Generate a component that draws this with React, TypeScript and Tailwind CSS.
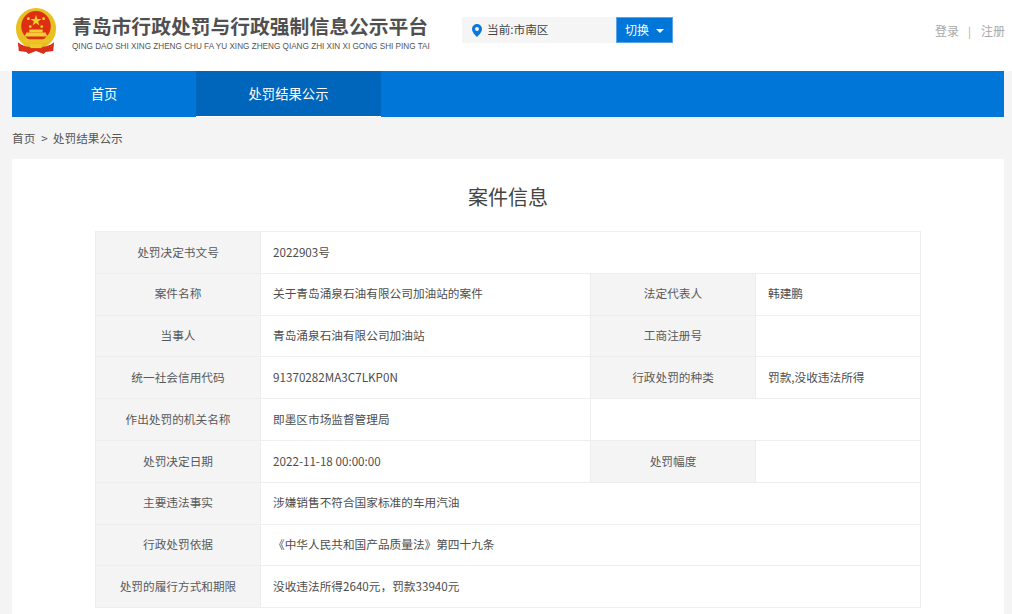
const font = { fontFamily: '"Noto Sans CJK SC", "Liberation Sans", sans-serif' };

const rows: { label: string; value: string; label2?: string; value2?: string; blank?: boolean }[] = [
  { label: "处罚决定书文号", value: "2022903号" },
  { label: "案件名称", value: "关于青岛涌泉石油有限公司加油站的案件", label2: "法定代表人", value2: "韩建鹏" },
  { label: "当事人", value: "青岛涌泉石油有限公司加油站", label2: "工商注册号", value2: "" },
  { label: "统一社会信用代码", value: "91370282MA3C7LKP0N", label2: "行政处罚的种类", value2: "罚款,没收违法所得" },
  { label: "作出处罚的机关名称", value: "即墨区市场监督管理局", blank: true },
  { label: "处罚决定日期", value: "2022-11-18 00:00:00", label2: "处罚幅度", value2: "" },
  { label: "主要违法事实", value: "涉嫌销售不符合国家标准的车用汽油" },
  { label: "行政处罚依据", value: "《中华人民共和国产品质量法》第四十九条" },
  { label: "处罚的履行方式和期限", value: "没收违法所得2640元，罚款33940元" },
];

function Emblem() {
  return (
    <svg width="42" height="46" viewBox="0 0 44 47" preserveAspectRatio="none">
      <circle cx="22" cy="21" r="21" fill="#e8c020" />
      <circle cx="22" cy="18.5" r="15.5" fill="#dc2f14" />
      <path d="M22 7l1.4 4.2h4.4l-3.6 2.6 1.4 4.2-3.6-2.6-3.6 2.6 1.4-4.2-3.6-2.6h4.4z" fill="#f2d020" />
      <circle cx="14" cy="11" r="1.5" fill="#f2d020" />
      <circle cx="30" cy="11" r="1.5" fill="#f2d020" />
      <circle cx="16" cy="19" r="1.5" fill="#f2d020" />
      <circle cx="28" cy="19" r="1.5" fill="#f2d020" />
      <path d="M12 25h20l2 4H10z" fill="#f0d030" />
      <path d="M15 22h14v3H15z" fill="#f0d030" />
      <path d="M8 32h28v3H8z" fill="#e9c428" />
      <path d="M3 35c5 4 11 5 19 5s14-1 19-5l-1 9-8 1-2 2-8-3-8 3-2-2-8-1z" fill="#d9301a" />
      <path d="M16 37h12v4H16z" fill="#edc92c" />
    </svg>
  );
}

function Label({ children }: { children: string }) {
  return (
    <td className="border border-[#eeeeee] bg-[#f4f4f4] pb-[2px] text-center align-middle text-[#595959]">
      {children}
    </td>
  );
}

function Value({ children, span }: { children?: string; span?: number }) {
  return (
    <td colSpan={span} className="border border-[#eeeeee] bg-white px-3 pb-[2px] align-middle text-[#4d4d4d]">
      {children}
    </td>
  );
}

export default function App() {
  return (
    <div className="h-[614px] w-[1012px] overflow-hidden bg-[#f4f4f4]" style={font}>
      <header className="flex h-[71px] items-start bg-white pl-[15px] pr-[7px] pt-[8px]">
        <Emblem />
        <div className="ml-[15px] w-[372px] pt-[4px]">
          <div className="whitespace-nowrap text-[19.8px] font-bold leading-[28px] text-[#505050]">
            青岛市行政处罚与行政强制信息公示平台
          </div>
          <div
            className="mt-[2px] whitespace-nowrap text-[8.18px] leading-[10px] text-[#555555]"
            style={{ fontFamily: '"Liberation Sans", sans-serif' }}
          >
            QING DAO SHI XING ZHENG CHU FA YU XING ZHENG QIANG ZHI XIN XI GONG SHI PING TAI
          </div>
        </div>
        <div className="ml-[18px] mt-[9px] flex h-[26px] w-[211px]">
          <div className="flex w-[154px] items-center bg-[#f5f5f5] pb-[2px] pl-[10px] text-[11.67px] text-[#444444]">
            <svg width="10" height="13" viewBox="0 0 10 13" className="mr-[5px] mt-[3px]">
              <path
                fillRule="evenodd"
                d="M5 0a5 5 0 0 1 5 5c0 3-3 6-5 8-2-2-5-5-5-8a5 5 0 0 1 5-5zm0 3a2 2 0 1 0 0 4 2 2 0 0 0 0-4z"
                fill="#0a78d8"
              />
            </svg>
            当前:市南区
          </div>
          <div className="flex w-[57px] items-center justify-center border border-[#5aa5e6] bg-[#0076d9] text-[12px] text-white">
            切换
            <span className="ml-[7px] mt-[2px] border-x-[4px] border-t-[4px] border-x-transparent border-t-white" />
          </div>
        </div>
        <div className="ml-auto mt-[14px] flex items-center text-[12px] text-[#a8a8a8]">
          <span>登录</span>
          <span className="ml-[9px] mr-[10px] text-[11px]">|</span>
          <span>注册</span>
        </div>
      </header>

      <div className="pl-3 pr-2">
        <nav className="flex h-[46px] bg-[#0076d9] text-[13.33px] text-white">
          <div className="flex w-[184px] items-center justify-center">首页</div>
          <div className="flex w-[185px] items-center justify-center border-b border-white bg-[#0066bb]">
            处罚结果公示
          </div>
        </nav>
        <div className="flex h-[42px] items-center text-[11.67px] text-[#555555]">
          首页
          <span className="ml-[6px] mr-[5px]">&gt;</span>
          处罚结果公示
        </div>
        <main className="h-[460px] bg-white px-[83px]">
          <h1 className="pb-[19px] pt-[23px] text-center text-[20px] font-normal leading-[30px] text-[#444444]">
            案件信息
          </h1>
          <table className="w-[825px] table-fixed border-collapse text-[11.67px]">
            <colgroup>
              <col className="w-[165px]" />
              <col className="w-[330px]" />
              <col className="w-[165px]" />
              <col className="w-[165px]" />
            </colgroup>
            <tbody>
              {rows.map((r) => (
                <tr key={r.label} className="h-[41.8px]">
                  <Label>{r.label}</Label>
                  {r.label2 ? (
                    <>
                      <Value>{r.value}</Value>
                      <Label>{r.label2}</Label>
                      <Value>{r.value2}</Value>
                    </>
                  ) : r.blank ? (
                    <>
                      <Value>{r.value}</Value>
                      <Value span={2} />
                    </>
                  ) : (
                    <Value span={3}>{r.value}</Value>
                  )}
                </tr>
              ))}
            </tbody>
          </table>
        </main>
      </div>
    </div>
  );
}
